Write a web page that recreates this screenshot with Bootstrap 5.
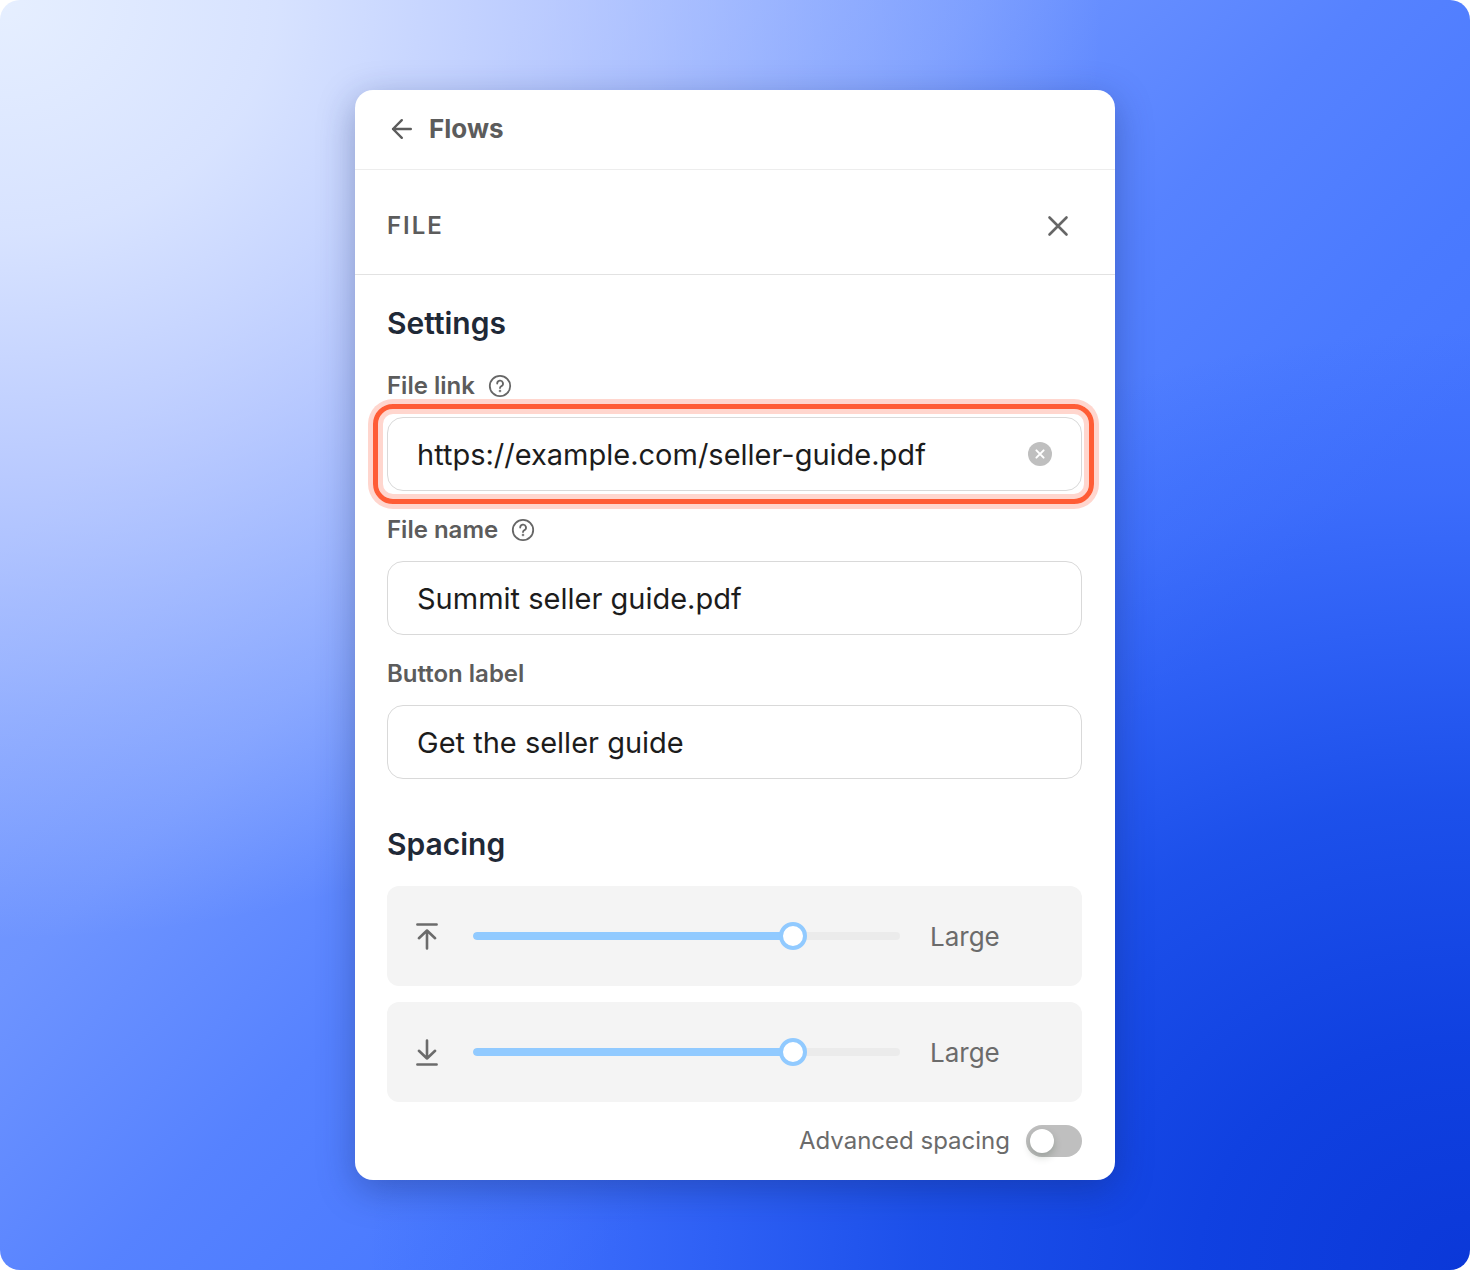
<!DOCTYPE html>
<html lang="en">
<head>
<meta charset="utf-8">
<meta name="viewport" content="width=device-width, initial-scale=1">
<title>Flows – File settings</title>
<link href="https://cdn.jsdelivr.net/npm/bootstrap@5.3.0/dist/css/bootstrap.min.css" rel="stylesheet">
<style>
  body { font-family: Inter, "Liberation Sans", sans-serif; background: #fff; color: #5c5c5c; }
  .stage {
    border-radius: 20px;
    padding: 90px 16px;
    background:
      radial-gradient(ellipse 75% 74% at 0 0, rgb(230,239,255) 0, rgba(228,236,255,.88) 25%, rgba(224,230,255,.62) 50%, rgba(220,228,255,.3) 75%, rgba(220,228,255,0) 100%),
      radial-gradient(ellipse 75% 74% at 100% 100%, rgb(11,56,216) 0, rgba(11,60,222,.92) 24%, rgba(11,64,226,.7) 50%, rgba(11,64,230,.43) 67%, rgba(20,70,236,.2) 83%, rgba(30,80,240,0) 100%),
      linear-gradient(135deg, #7c9eff 20%, #6e94ff 36%, #5682ff 50%, #4a7aff 61%, #4676ff 68%);
  }
  .panel-card { width: 100%; max-width: 760px; border: 0; border-radius: 18px; box-shadow: 0 10px 36px rgba(20,40,100,.36); }
  .top-bar { height: 80px; padding: 0 35px 2px; border-bottom: 1px solid #ededed; }
  .title-bar { height: 105px; padding: 8px 41px 0 32px; border-bottom: 1px solid #e2e2e2; }
  .back-link { font-size: 26px; line-height: 32px; gap: 15px; color: #5c5c5c; }
  .kind-title { font-size: 24px; line-height: 32px; letter-spacing: 2px; }
  .icon-btn { padding: 0; border: 0; background: none; color: #666; line-height: 0; }
  .panel-body { padding: 30px 33px 23px 32px; }
  .section-title { font-size: 30px; line-height: 36px; color: #1f2937; }
  .field-label { font-size: 24px; line-height: 32px; }
  .field-row { gap: 13px; margin-bottom: 15px; }
  .field-stack { gap: 23px; margin-top: 29px; }
  .field-input { height: 74px; padding: 0 29px; font-size: 29px; color: #1c1c1c; border: 1px solid #d9d9d9; border-radius: 16px; }
  .clearable .field-input { padding-right: 70px; }
  .clear-btn { position: absolute; right: 30px; top: 25px; }
  .highlight { position: absolute; inset: -13px -12px -13px -14px; border: 5px solid #ff5c35; border-radius: 20px;
    box-shadow: 0 0 0 5px #ffd6ce, inset 0 0 0 5px #ffd6ce; pointer-events: none; }
  .spacing-title { margin-top: 47px; }
  .slider-list { gap: 16px; margin-top: 24px; }
  .slider-row { height: 100px; padding: 0 24px; gap: 16px; border-radius: 12px; background: #f4f4f4; color: #6b6b6b; }
  .slider-cell { display: grid; align-items: center; }
  .slider-cell > * { grid-area: 1 / 1; }
  .slider-track { height: 8px; margin: 0 14px; border-radius: 4px; background: #ebebeb; }
  .slider-fill { background: #91caff; border-radius: 4px 0 0 4px; }
  .slider-input { -webkit-appearance: none; appearance: none; width: 100%; height: 28px; margin: 0; background: transparent; }
  .slider-input::-webkit-slider-thumb { -webkit-appearance: none; width: 28px; height: 28px; border: 4px solid #91caff; border-radius: 50%; background: #fff; }
  .slider-input::-moz-range-thumb { width: 20px; height: 20px; border: 4px solid #91caff; border-radius: 50%; background: #fff; }
  .slider-value { width: 128px; padding-top: 2px; font-size: 26px; line-height: 32px; }
  .advanced { gap: 16px; margin-top: 23px; color: #6b6b6b; }
  .advanced-label { font-size: 24px; line-height: 32px; }
  .toggle { -webkit-appearance: none; appearance: none; width: 56px; height: 32px; margin: 0; border-radius: 16px; background: #bfbfbf; }
  .toggle::before { content: ""; display: block; width: 24px; height: 24px; margin: 4px; border-radius: 50%; background: #fff; box-shadow: 0 4px 8px rgba(0,35,11,.2); }
  .toggle:checked { background: #91caff; }
  .toggle:checked::before { margin-left: 28px; }
</style>
<script src="https://cdn.jsdelivr.net/npm/bootstrap@5.3.0/dist/js/bootstrap.bundle.min.js"></script>
</head>
<body>
<svg class="d-none" aria-hidden="true">
  <symbol id="help" viewBox="0 0 24 24" fill="none" stroke="currentColor" stroke-width="1.8" stroke-linecap="round" stroke-linejoin="round">
    <circle cx="12" cy="12" r="10.2"/>
    <path d="M9.2 9.6a2.9 2.9 0 1 1 4.3 2.5c-1 .6-1.5 1-1.5 2"/>
    <circle cx="12" cy="17" r=".4"/>
  </symbol>
</svg>
<main class="stage min-vh-100 d-flex justify-content-center align-items-start">
  <div class="card panel-card">
    <header class="top-bar d-flex align-items-center">
      <a href="#" class="back-link d-inline-flex align-items-center fw-bold text-decoration-none">
        <svg width="24" height="24" viewBox="0 0 24 24" fill="none" stroke="currentColor" stroke-width="2.4" stroke-linecap="round" stroke-linejoin="round" aria-hidden="true"><path d="M20.8 12H3M11.8 3.2 3 12l8.8 8.8"/></svg>
        Flows
      </a>
    </header>
    <div class="title-bar d-flex align-items-center justify-content-between">
      <h1 class="kind-title fw-semibold mb-0">FILE</h1>
      <button type="button" class="icon-btn" aria-label="Close">
        <svg width="32" height="32" viewBox="0 0 32 32" fill="none" stroke="currentColor" stroke-width="2.6" stroke-linecap="round"><path d="m7.5 7.5 17 17m0-17-17 17"/></svg>
      </button>
    </div>
    <div class="panel-body">
      <h2 class="section-title fw-semibold mb-0">Settings</h2>
      <div class="field-stack d-flex flex-column">
        <div>
          <div class="field-row d-flex align-items-center">
            <label class="field-label fw-semibold" for="file-link">File link</label>
            <button type="button" class="icon-btn" aria-label="Help for file link"><svg width="24" height="24"><use href="#help"/></svg></button>
          </div>
          <div class="clearable position-relative">
            <input id="file-link" type="text" class="form-control field-input" value="https://example.com/seller-guide.pdf">
            <button type="button" class="icon-btn clear-btn" aria-label="Clear">
              <svg width="24" height="24" viewBox="0 0 24 24"><circle cx="12" cy="12" r="12" fill="#bfbfbf"/><path d="m8.4 8.4 7.2 7.2m0-7.2-7.2 7.2" stroke="#fff" stroke-width="2" stroke-linecap="round"/></svg>
            </button>
            <div class="highlight"></div>
          </div>
        </div>
        <div>
          <div class="field-row d-flex align-items-center">
            <label class="field-label fw-semibold" for="file-name">File name</label>
            <button type="button" class="icon-btn" aria-label="Help for file name"><svg width="24" height="24"><use href="#help"/></svg></button>
          </div>
          <input id="file-name" type="text" class="form-control field-input" value="Summit seller guide.pdf">
        </div>
        <div>
          <div class="field-row d-flex align-items-center">
            <label class="field-label fw-semibold" for="button-label">Button label</label>
          </div>
          <input id="button-label" type="text" class="form-control field-input" value="Get the seller guide">
        </div>
      </div>

      <h2 class="section-title spacing-title fw-semibold mb-0">Spacing</h2>
      <div class="slider-list d-flex flex-column">
        <div class="slider-row d-flex align-items-center">
          <svg class="flex-shrink-0" width="32" height="32" viewBox="0 0 32 32" fill="none" stroke="currentColor" stroke-width="2.6" stroke-linecap="round" stroke-linejoin="round" aria-hidden="true"><path d="M6.4 4.5h19.2M16 28.5V10.5M7.9 18.2 16 10.5l8.1 7.7"/></svg>
          <div class="slider-cell flex-grow-1">
            <div class="progress slider-track"><div class="progress-bar slider-fill" style="width: 75%"></div></div>
            <input id="space-top" type="range" class="slider-input" min="0" max="4" value="3" aria-label="Top spacing">
          </div>
          <output class="slider-value flex-shrink-0" for="space-top">Large</output>
        </div>
        <div class="slider-row d-flex align-items-center">
          <svg class="flex-shrink-0" width="32" height="32" viewBox="0 0 32 32" fill="none" stroke="currentColor" stroke-width="2.6" stroke-linecap="round" stroke-linejoin="round" aria-hidden="true"><path d="M6.4 28.5h19.2M16 4.5V22.5M7.9 14.8 16 22.5l8.1-7.7"/></svg>
          <div class="slider-cell flex-grow-1">
            <div class="progress slider-track"><div class="progress-bar slider-fill" style="width: 75%"></div></div>
            <input id="space-bottom" type="range" class="slider-input" min="0" max="4" value="3" aria-label="Bottom spacing">
          </div>
          <output class="slider-value flex-shrink-0" for="space-bottom">Large</output>
        </div>
      </div>
      <div class="advanced d-flex justify-content-end align-items-center">
        <label class="advanced-label" for="advanced-toggle">Advanced spacing</label>
        <input id="advanced-toggle" type="checkbox" role="switch" class="toggle">
      </div>
    </div>
  </div>
</main>
</body>
</html>
